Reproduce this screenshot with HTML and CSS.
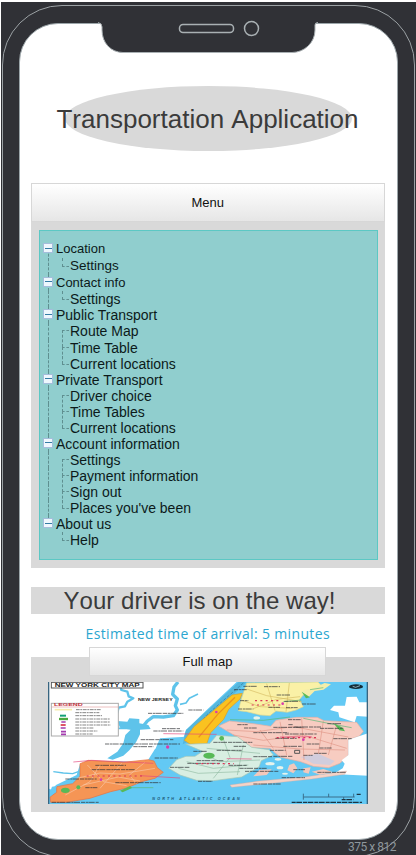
FILE: index.html
```html
<!DOCTYPE html>
<html lang="en">
<head>
<meta charset="utf-8">
<title>Transportation Application</title>
<link rel="stylesheet" href="styles.css">
</head>
<body>
<div class="stage">
  <div class="device">
    <main class="screen">
      <svg class="notch" width="220" height="40" viewBox="0 0 220 40">
        <path d="M0 8.500Q4 9 4 13V16C4 29 13 38.500 25 38.500H194C206 38.500 217 29 217 16V11Q217 8.500 220 8.500V5H0Z" fill="#303136"/>
        <path d="M0 8.500Q4 9 4 13V16C4 29 13 38.500 25 38.500H194C206 38.500 217 29 217 16V11Q217 8.500 220 8.500" fill="none" stroke="#a9b0b3"/>
        <rect x="81.500" y="10.500" width="54" height="8" rx="3.500" fill="none" stroke="#a9b0b3" stroke-width="1.500"/>
        <circle cx="153.500" cy="14.500" r="7" fill="none" stroke="#a9b0b3" stroke-width="1.500"/>
      </svg>
      <header class="logo"><h1>Transportation Application</h1></header>
      <section class="menu">
        <button class="btn menu-btn">Menu</button>
        <ul class="tree">
          <li class="node small"><i class="box"></i>Location</li>
          <li class="leaf small last semi">Settings</li>
          <li class="node small"><i class="box"></i>Contact info</li>
          <li class="leaf last">Settings</li>
          <li class="node"><i class="box"></i>Public Transport</li>
          <li class="leaf">Route Map</li>
          <li class="leaf">Time Table</li>
          <li class="leaf last">Current locations</li>
          <li class="node"><i class="box"></i>Private Transport</li>
          <li class="leaf">Driver choice</li>
          <li class="leaf">Time Tables</li>
          <li class="leaf last">Current locations</li>
          <li class="node"><i class="box"></i>Account information</li>
          <li class="leaf">Settings</li>
          <li class="leaf">Payment information</li>
          <li class="leaf">Sign out</li>
          <li class="leaf last">Places you've been</li>
          <li class="node stop"><i class="box"></i>About us</li>
          <li class="leaf last end">Help</li>
        </ul>
      </section>
      <h2 class="status">Your driver is on the way!</h2>
      <p class="eta">Estimated time of arrival: 5 minutes</p>
      <section class="map-panel">
        <button class="btn map-btn">Full map</button>
        <svg class="map" viewBox="24 21 960 366" preserveAspectRatio="none">
          <rect x="24" y="21" width="960" height="366" fill="#63c9f4"/>
          <!-- New Jersey mainland -->
          <path d="M24 21H590L500 105L438 165L425 205L345 222L320 262L205 258L120 268L110 300L48 330L36 345L24 340Z" fill="#fff"/>
          <g fill="none" stroke="#5ec3ea" stroke-width="7" stroke-linejoin="round">
            <path d="M240 24L244 45L262 50L266 64L280 70L262 80L255 94L236 98L232 112L222 130L200 145L190 165"/>
            <path d="M414 21L402 36L398 58L412 72L406 92L412 105L400 122L370 126L340 125L322 138L306 158" stroke-width="10"/>
            <path d="M474 57L448 70L438 84L420 88" stroke-width="5"/>
            <path d="M185 176L198 178L235 160L280 160" stroke-width="5"/>
            <path d="M40 290L70 294L98 296L115 290" stroke-width="4"/>
          </g>
          <path d="M232 138L262 140L268 130L298 132V145L325 150L332 162L300 164L300 178L288 202L268 226L250 242L218 254L202 250L232 230L250 205L256 180L272 164L240 158Z" fill="#5ec3ea"/>
          <path d="M360 190L438 185L420 240L390 270L330 262L345 225Z" fill="#63c9f4"/>
          <path d="M596 21H620L515 120L468 190L428 208L438 165Z" fill="#55b7dd"/>
          <path d="M610 24L500 120L437 197" fill="none" stroke="#31789b" stroke-width="2" stroke-dasharray="9 5"/>
          <!-- Staten Island -->
          <path d="M120 266L145 256L250 262L325 254L342 258L352 278L370 292L345 310L305 320L260 339L212 350L150 370L80 382L32 382L30 366L50 352L50 335L98 326L120 304Z" fill="#f59555" stroke="#e96f3e" stroke-width="2"/>
          <path d="M36 335L50 333L46 350L32 364L24 366Z" fill="#63c9f4"/>
          <!-- Manhattan -->
          <path d="M576 60L607 55L600 72L566 103L551 133L512 173L500 207L450 207L433 196L462 155L526 102Z" fill="#fac220" stroke="#dda025" stroke-width="2"/>
          <path d="M585 67L533 118L476 187" fill="none" stroke="#eb941b" stroke-width="4"/>
          <!-- Bronx -->
          <path d="M620 24L834 21L850 38L810 45L790 60L778 74L790 95L768 105L742 112L708 108L690 122L660 120L620 110L595 107L604 72Z" fill="#faf1a6" stroke="#d6d493" stroke-width="2"/>
          <!-- Queens -->
          <path d="M536 153L568 138L640 146L692 154L708 136L770 127L832 127L852 137L950 142L970 169L958 183L925 194V240L900 265L866 278L820 274L782 260L720 246L690 220L635 218L590 185Z" fill="#f7ccc1" stroke="#e5afa0" stroke-width="2"/>
          <path d="M782 246L835 236L884 258L870 270L820 266Z" fill="#d1cddd"/>
          <!-- Brooklyn -->
          <path d="M438 208L510 205L530 181L592 185L635 217L687 224L700 240L664 257L657 276L605 306L520 317L470 316L420 300L386 280L410 254L438 244L465 244L488 229Z" fill="#d8eee2" stroke="#a6c7b5" stroke-width="2"/>
          <!-- Bays, islands and Long Island shore -->
          <path d="M870 105L882 92H915L920 66L950 65L958 82H984V125L950 123L944 142L898 127L895 112Z" fill="#fff"/>
          <path d="M925 194L984 175V302L880 297L908 280L914 266L905 256L925 240Z" fill="#fff"/>
          <path d="M854 24L873 28L850 44L824 48L806 66L780 55L792 45L820 40Z" fill="#f4edaa"/>
          <path d="M570 330L650 319L800 305L920 288L914 298L815 312L710 323L575 337Z" fill="#f5d3c7" stroke="#dfa69a"/>
          <path d="M658 285L695 283L680 300L640 304ZM748 270L762 265L772 280L760 295L742 286ZM790 280L812 277L806 296L790 292ZM815 290L850 282L880 292L840 299Z" fill="#f4c8bb"/>
          <g fill="#e6f3ec"><ellipse cx="690" cy="266" rx="14" ry="5"/><ellipse cx="720" cy="278" rx="10" ry="5"/><ellipse cx="714" cy="253" rx="10" ry="4"/><ellipse cx="650" cy="129" rx="10" ry="5"/><ellipse cx="735" cy="296" rx="9" ry="3"/></g>
          <!-- Streets -->
          <g fill="none" stroke-width="2">
            <path stroke="#f7c6a4" d="M110 310L180 294L240 297L345 280M142 270L190 320L260 332M245 265L180 340M130 330L235 306L300 318M315 262L268 300L290 326M76 360L150 320L180 270"/>
            <path stroke="#d7bd63" d="M620 42L680 62L785 80M640 101L710 73L780 65M680 26L705 107M748 24L738 110M607 76L660 95L755 100"/>
            <path stroke="#e19788" d="M560 165L650 170L760 155L925 186M580 180L670 196L790 180L920 220M720 140L740 240M785 130L792 255M850 138L835 237M640 210L780 222L915 225M660 165L700 220M890 150L865 240"/>
            <path stroke="#93bca5" d="M492 238L540 260L660 255M440 260L520 280L625 270M550 192L570 248L520 310M610 210L592 300M415 280L475 295L600 290M500 220L660 235"/>
            <path stroke="#e4487d" d="M370 176L530 178M100 261L155 256L340 265M300 302L420 309M560 251L635 252M720 186L815 185"/>
            <path stroke="#58b775" d="M810 44L850 38M730 80L784 75M790 130L880 148L935 158M570 134L670 136L750 126M270 338L340 338"/>
          </g>
          <g fill="#57b957"><ellipse cx="507" cy="242" rx="17" ry="9"/><ellipse cx="76" cy="346" rx="13" ry="8"/><path d="M240 347L270 333L276 339L248 352ZM880 144L908 158L915 169L898 166ZM785 50L810 67L798 70Z"/><circle cx="115" cy="337" r="6"/><circle cx="545" cy="190" r="7"/></g>
          <g fill="none" stroke="#2e3034" stroke-width="3" stroke-opacity=".7" stroke-dasharray="13 2 7 1 18 3">
            <path d="M195 207H420M280 215H340M366 161H420M340 168H430M302 194H400M324 115H430M445 105H490M166 271H258M155 284H285M76 312H170M226 323H362M136 338H172M390 277H450M344 249H413M35 382H176"/>
            <path d="M582 44H620M672 35H720M710 60H750M594 102H640M685 97H720M733 79H778M738 98H773M786 87H828M600 77H625M610 34H650"/>
            <path d="M592 149H623M612 159H650M640 173H745M700 157H790M763 156H843M745 149H760M735 177H830M706 190H770M880 191H935M800 207H838M690 226H737M730 214H785M822 235H860M838 219H875M790 241H818M700 244H758M840 160H910M744 134H782M862 146H906"/>
            <path d="M520 202H637M581 214H618M530 226H605M640 245H696M470 257H550M598 280H680M442 265H540M615 289H715M474 319H519M640 327H722M725 308H795M832 292H918M566 271H620M760 284H795M460 229H500"/>
          </g>
          <g fill="none" stroke="#da3457" stroke-width="3.500" stroke-dasharray="6 10">
            <path d="M140 303H310M645 77H718M635 90H730M710 188H835M468 266H582"/>
          </g>
          <g fill="#d83cac"><circle cx="529" cy="111" r="4"/><circle cx="383" cy="216" r="5"/><circle cx="183" cy="314" r="4"/><circle cx="728" cy="86" r="4"/><circle cx="790" cy="194" r="4"/></g>
          <path d="M764 226H779V235H764Z" fill="none" stroke="#555" stroke-width="3"/>
          <!-- Legend -->
          <rect x="34" y="85" width="201" height="98" fill="#fff" stroke="#aaa" stroke-width="3"/>
          <path d="M35 96H235" stroke="#e4a0a0" stroke-width="2"/>
          <path d="M44 104H96" stroke="#f5edae" stroke-width="5"/>
          <path d="M60 122H78" stroke="#13a078" stroke-width="6"/>
          <path d="M57 132H84" stroke="#4ba83f" stroke-width="7"/>
          <path d="M64 141H77M62 159H77M63 170H78M63 178H78" stroke="#a43caf" stroke-width="5"/>
          <path d="M62 150H77" stroke="#d93246" stroke-width="5"/>
          <path d="M108 104H184M106 113H178M106 122H186M106 132H210M106 141H210M106 150H212M106 159H162M106 168H172M106 177H158" stroke="#858585" stroke-width="3" stroke-dasharray="11 2 6 2"/>
          <text class="legend-title" x="42" y="94" textLength="86" lengthAdjust="spacingAndGlyphs">LEGEND</text>
          <rect x="34" y="22" width="275" height="17" fill="#fff" stroke="#555" stroke-width="3"/>
          <text class="map-title" x="44" y="36" textLength="255" lengthAdjust="spacingAndGlyphs">NEW YORK CITY MAP</text>
          <text class="place" x="294" y="78" textLength="104" lengthAdjust="spacingAndGlyphs">NEW JERSEY</text>
          <text class="ocean" x="337" y="376" textLength="262">NORTH ATLANTIC OCEAN</text>
          <!-- Scale and compass mark -->
          <path d="M790 366H944M790 356V374M866 356V366M941 356V366M911 366V374" stroke="#3a6f8c" stroke-width="3" fill="none"/>
          <path d="M950 358H964M905 374H940M755 382H966" stroke="#1c3543" stroke-width="4" stroke-dasharray="12 2 17 3"/>
          <ellipse cx="948" cy="35" rx="21" ry="7" fill="#152b36"/>
          <path d="M938 34L947 37L960 32" stroke="#c4edfb" stroke-width="2" fill="none"/>
          <path d="M26 21V387M982 21V387" stroke="#386580" stroke-width="4"/>
        </svg>
      </section>
    </main>
  </div>
  <span class="dims">375 x 812</span>
</div>
</body>
</html>
```
FILE: styles.css
```css
* { box-sizing: border-box; }
html, body { margin: 0; height: 100%; overflow: hidden; background: #fff; }
body { font-family: "Liberation Sans", Arial, sans-serif; padding: 2px 0 0 1px; }
h1, h2, p, ul { margin: 0; padding: 0; font-weight: 400; }

.stage {
  position: relative;
  height: 853px;
  padding: 2.500px 0 0 1px;
  overflow: hidden;
  background: #303136;
}
.device {
  width: 413px;
  height: 852px;
  padding: 17px 16px;
  border: 1.500px solid #9ba1a4;
  border-radius: 60px;
}
.screen {
  position: relative;
  width: 379px;
  height: 817px;
  padding: 62px 12px 0 10.500px;
  background: #fff;
  border: 1px solid #9ca6aa;
  border-radius: 39px;
}
.notch { position: absolute; left: 78px; top: -10px; }

.logo {
  display: flex;
  align-items: center;
  justify-content: center;
  width: 287px;
  height: 65px;
  margin: 0 0 32px 34.500px;
  padding-top: 2px;
  border-radius: 50%;
  background: #d9d9d9;
}
.logo h1 {
  margin-left: -2px;
  font-size: 26px;
  line-height: 30px;
  font-kerning: none;
  color: #3b3b3b;
  white-space: nowrap;
}

.btn {
  display: block;
  padding: 0;
  font: 13px "Liberation Sans", Arial, sans-serif;
  color: #111;
  text-align: center;
  background: linear-gradient(#fff, #e6e6e6);
  border: 1px solid #d7d7d7;
}
.menu { height: 385px; background: #d9d9d9; }
.menu-btn { width: 100%; height: 39px; padding-top: 1px; }

.tree {
  height: 330px;
  margin: 8px 7px 0 8px;
  padding-top: 10.500px;
  list-style: none;
  background: #90cece;
  border: 1px solid #5cc8c4;
}
.tree li {
  position: relative;
  height: 16.060px;
  line-height: 16px;
  font-size: 14px;
  color: #0c1a1a;
  white-space: nowrap;
}
.tree .small { height: 16.800px; font-size: 13px; }
.tree .semi { font-size: 13.500px; }
.node { padding-left: 16.500px; }
.leaf { padding-left: 30.500px; }
.tree li::before {
  content: "";
  position: absolute;
  left: 8px;
  top: 0;
  height: 100%;
  border-left: 1px dashed #5f8f90;
}
.tree li:first-child::before { top: 8px; }
.tree li.stop::before { height: 8px; }
.tree li.end::before { display: none; }
.leaf::after {
  content: "";
  position: absolute;
  left: 22.500px;
  top: 7px;
  width: 6px;
  height: 16px;
  border-left: 1px dashed #5f8f90;
  border-top: 1px dashed #5f8f90;
}
.leaf.last::after {
  top: 0;
  height: 8px;
  border-top: 0;
  border-bottom: 1px dashed #5f8f90;
}
.box {
  position: absolute;
  z-index: 1;
  left: 3.500px;
  top: 2px;
  width: 10px;
  height: 10px;
  background: linear-gradient(#347ca5, #347ca5) center / 7px 1px no-repeat, #eef7fd;
  border: 1px solid #a4bddb;
}

.status {
  height: 27px;
  margin-top: 19px;
  padding-left: 33px;
  font-size: 24px;
  line-height: 27px;
  font-kerning: none;
  letter-spacing: .050px;
  color: #3b3b3b;
  background: #d9d9d9;
}
.eta {
  margin-top: 10.500px;
  font: 14px/20px "Open Sans", "Noto Sans", sans-serif;
  letter-spacing: .350px;
  color: #2ba6d0;
  text-align: center;
  white-space: nowrap;
}
.map-panel { height: 155px; margin-top: 13px; background: #d9d9d9; display: flow-root; }
.map-btn { width: 237px; height: 29px; margin: -10px 0 0 58.500px; }
.map { display: block; width: 320px; height: 122px; margin: 6px 0 0 17.500px; }
.map-title { font: bold 16px "Liberation Sans", Arial, sans-serif; fill: #222; }
.legend-title { font: bold 9px "Liberation Sans", Arial, sans-serif; fill: #c22f3d; }
.place { font: bold 10px "Liberation Sans", Arial, sans-serif; fill: #222; }
.ocean { font: italic bold 11px "Liberation Sans", Arial, sans-serif; fill: #17506e; }

.dims {
  position: absolute;
  left: 347px;
  top: 836.500px;
  font: 12px/16px Roboto, sans-serif;
  letter-spacing: -.500px;
  color: #8e979c;
  white-space: nowrap;
}
```
